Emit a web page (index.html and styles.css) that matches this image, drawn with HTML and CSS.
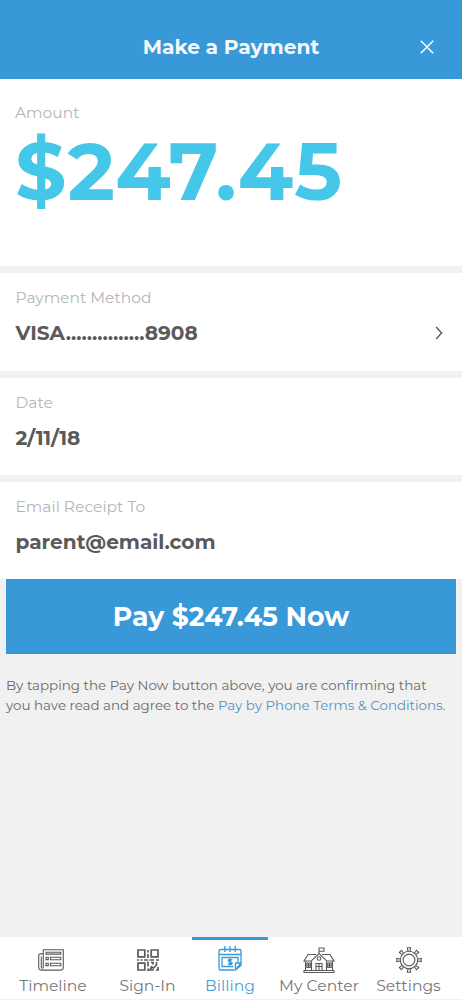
FILE: index.html
```html
<!DOCTYPE html>
<html lang="en">
<head>
<meta charset="utf-8">
<title>Make a Payment</title>
<link rel="stylesheet" href="styles.css">
</head>
<body>
<div class="screen">
  <header class="header">
    <h1 class="title">Make a Payment</h1>
    <svg class="close" viewBox="0 0 14 14"><path d="M.8.8l12.4 12.4M13.2.8L.8 13.2"/></svg>
  </header>
  <main class="cards">
    <section class="card card-amount">
      <div class="label">Amount</div>
      <div class="amount">$247.45</div>
    </section>
    <section class="card">
      <div class="label">Payment Method</div>
      <div class="value">VISA...............8908
        <svg class="chevron" viewBox="0 0 8 14"><path d="M1.2 1l5.4 6-5.4 6"/></svg>
      </div>
    </section>
    <section class="card">
      <div class="label">Date</div>
      <div class="value date">2/11/18</div>
    </section>
    <section class="card">
      <div class="label">Email Receipt To</div>
      <div class="value">parent@email.com</div>
    </section>
  </main>
  <button class="pay">Pay $247.45 Now</button>
  <p class="terms">By tapping the Pay Now button above, you are confirming that<br>you have read and agree to the <a>Pay by Phone Terms &amp; Conditions.</a></p>
  <nav class="tabs">
    <div class="tab tab-timeline">
      <svg class="icon news" viewBox="0 0 26 22"><path d="M5.3 18V.8h20v17.8c0 1.500-1 2.500-2.500 2.500H3.300c-1.600 0-2.600-1-2.600-2.500V6.500c0-1 .6-1.600 1.600-1.600h3M5.300 18c0 1.600-2 1.600-2 0V7.500"/><path d="M8 3.200h14.800v1.900H8zM8 8.300h2.300v2.300H8zM12.500 8.300h10.300v2.500H12.500zM8 14.300h2.300v2.300H8zM12.500 14.300h10.300v2.500H12.500z"/></svg>
      <span>Timeline</span>
    </div>
    <div class="tab tab-sign">
      <svg class="icon qr" viewBox="0 0 22 22"><path d="M1 1h6.800v6.800H1zM14.200 1H21v6.800h-6.800zM1 14.200h6.800V21H1z"/><path d="M11 1v2.500M11 5v4M0 11h2M3.500 11h2M7 11h4M12.500 11H17M19 11h3M11 12.500v5M11 19.500V22M14 13.500h2v2M19.500 13v3l-3 3-2-1-1.500 3H17M21 18v3h-2"/></svg>
      <span>Sign-In</span>
    </div>
    <div class="tab active">
      <svg class="icon calendar" viewBox="0 0 24 26"><path d="M16.500 25H2.500Q1 25 1 23.500V6q0-1.500 1.500-1.500h19Q23 4.500 23 6v12M1 9.500h22M6.800 1v6M12 1v6M17.200 1v6"/><path d="M15.500 21.500H4v-9h16V17"/><path d="M23 18h-5.500v7zM23 18v2.500L17.500 25"/><path class="dollar" d="M14 15.200c-1-1-3.600-1-3.600.4s3.600.9 3.600 2.500-2.700 1.600-3.800.5M12.100 13.500v6.700"/></svg>
      <span>Billing</span>
    </div>
    <div class="tab tab-center">
      <svg class="icon school" viewBox="0 0 32 26"><path d="M16 6.500V1h5v3.200h-5M8 14H1l4-6.500h8M19 7.500h8l4 6.500h-7M8 14.200l8-7.700 8 7.700M2.500 14v9.500M29.500 14v9.500M1 23.500h30v2H1zM8.500 14.500v9M23.500 14.500v9"/><circle cx="16" cy="11.500" r="1.800"/><path d="M13 23.500V16.500h6v7M16 16.500v7M13 19.500h6M3.800 16h3.500v4.500H3.800zM5.600 16v4.500M3.800 18.200h3.500M24.700 16h3.500v4.500h-3.500zM26.400 16v4.500M24.700 18.200h3.500"/></svg>
      <span>My Center</span>
    </div>
    <div class="tab tab-settings">
      <svg class="icon gear" viewBox="0 0 26 26"><circle cx="13" cy="13" r="8.700"/><circle cx="13" cy="13" r="5.900"/><g id="teeth"><path id="tooth" d="M12 4.400L11.400.8h3.200L14 4.400"/><use href="#tooth" transform="rotate(45 13 13)"/><use href="#tooth" transform="rotate(90 13 13)"/><use href="#tooth" transform="rotate(135 13 13)"/></g><use href="#teeth" transform="rotate(180 13 13)"/></svg>
      <span>Settings</span>
    </div>
  </nav>
</div>
</body>
</html>
```

FILE: styles.css
```css
* { box-sizing: border-box; }
body { margin: 0; font-family: Montserrat, Inter, sans-serif; color: #5a5a5a; }
.screen { width: 462px; height: 1000px; display: flex; flex-direction: column; background: #f1f1f1; overflow: hidden; }
.header { height: 79px; flex: none; background: #3898d8; color: #f6f8fa; display: grid; grid-template-columns: 42px 1fr 42px; align-items: center; padding-top: 14px; }
.title { grid-column: 2; margin: 0; text-align: center; font-size: 20.200px; font-weight: 700; line-height: 24px; white-space: nowrap; }
.close { width: 14px; height: 14px; fill: none; stroke: currentColor; stroke-width: 1.600; }
.cards { display: grid; grid-template-rows: 187px 97.500px 97.500px 97px; gap: 7px; flex: none; }
.card { background: #fff; padding: 15px 15.500px 0; }
.card-amount { padding: 24px 15px 0; }
.label { font-size: 15.500px; line-height: 20px; font-weight: 400; color: #b5b5b5; white-space: nowrap; }
.value { font-size: 20.100px; line-height: 24px; font-weight: 700; margin-top: 13px; display: flex; align-items: center; white-space: nowrap; }
.date { letter-spacing: -.2px; }
.chevron { width: 8px; height: 14px; margin-left: auto; margin-right: 3.500px; fill: none; stroke: currentColor; stroke-width: 1.400; }
.amount { font-size: 80.500px; line-height: 97px; font-weight: 700; letter-spacing: 1.100px; color: #44c7e9; white-space: nowrap; }
.pay { height: 75px; margin: 0 6px; padding: 0; border: 0; background: #3898d8; color: #fff; font: 700 26.700px/32px Montserrat, Inter, sans-serif; flex: none; }
.terms { margin: 21px 6px 0; font-size: 13.420px; line-height: 20px; white-space: nowrap; color: #6a6a6a; flex: none; }
.terms a { color: #5594bd; }
.tabs { margin-top: auto; height: 63px; background: #fff; border-bottom: 1px solid #f1f1f1; display: grid; grid-template-columns: 106px 86px 76px 102px 92px; flex: none; }
.tab { display: flex; flex-direction: column; align-items: center; justify-content: space-between; padding: 10px 0 3px; font-size: 15.600px; line-height: 20px; font-weight: 400; white-space: nowrap; }
.tab span { color: #777; }
.tab-sign { padding-right: 3px; }
.tab-settings { padding-right: 15px; }
.active { color: #3898d8; border-top: 3px solid #3898d8; padding-top: 5px; }
.active span { color: #4a9fd9; }
.icon { height: 25px; fill: none; stroke: currentColor; stroke-width: 1.100; }
.news { width: 26px; height: 22px; margin: 2px 5px 0 0; }
.qr { width: 22px; height: 22px; margin-top: 2px; stroke-width: 1.700; }
.calendar { width: 24px; height: 26px; stroke-width: 1.300; }
.dollar { stroke-width: 1.700; }
.school { width: 32px; height: 26px; }
.gear { width: 26px; height: 26px; }
```
